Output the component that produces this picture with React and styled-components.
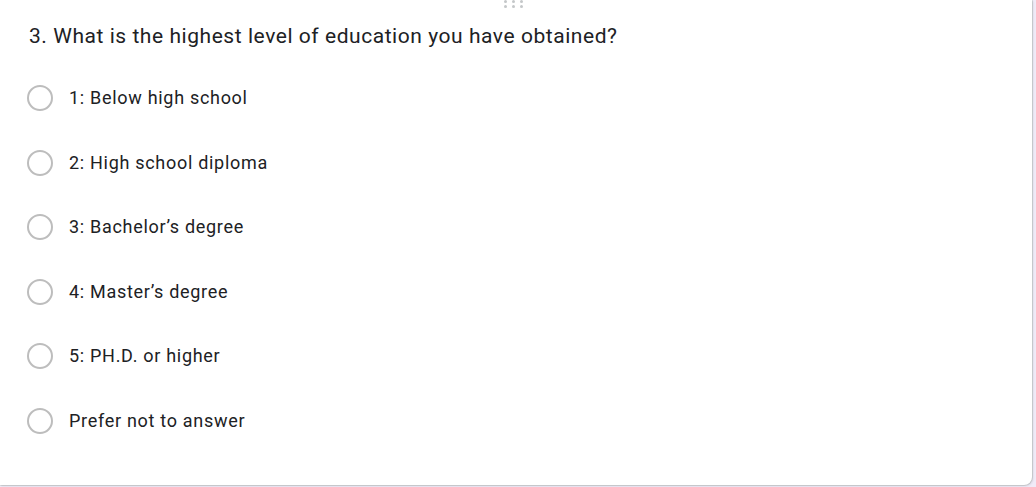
import React from "react";
import styled, { createGlobalStyle } from "styled-components";

const Global = createGlobalStyle`
  html, body { margin: 0; padding: 0; }
  body {
    background: #f0ebf8;
    font-family: Roboto, "Liberation Sans", Arial, sans-serif;
    width: 1036px;
    height: 487px;
    overflow: hidden;
  }
`;

const Card = styled.div`
  position: relative;
  box-sizing: border-box;
  width: 1032px;
  height: 485px;
  background: #ffffff;
  border-radius: 0 0 8px 0;
  box-shadow: 1px 1px 2px rgba(60, 64, 67, 0.18), 0 0 0 1px #dadce0;
  padding: 24px 0 0 29px;
`;

const Handle = styled.div`
  position: absolute;
  top: 0;
  left: 504px;
  display: grid;
  grid-template-columns: repeat(3, 3px);
  grid-auto-rows: 3px;
  column-gap: 5px;
  row-gap: 2px;
`;

const Dot = styled.span`
  width: 3px;
  height: 3px;
  border-radius: 50%;
  background: #c4c7c9;
`;

const Title = styled.h2`
  margin: 0;
  font-size: 21px;
  line-height: 24px;
  font-weight: 400;
  color: #202124;
  letter-spacing: 0.55px;
`;

const Options = styled.div`
  display: flex;
  flex-direction: column;
  gap: 38.6px;
  margin-top: 37px;
  margin-left: -2px;
`;

const Option = styled.label`
  display: flex;
  align-items: center;
  gap: 16px;
  height: 26px;
  cursor: pointer;
`;

const Radio = styled.span`
  box-sizing: border-box;
  width: 26px;
  height: 26px;
  border-radius: 50%;
  border: 2px solid #bdbdbd;
  flex-shrink: 0;
`;

const Label = styled.span`
  font-size: 18px;
  line-height: 22px;
  color: #202124;
  letter-spacing: 0.7px;
`;

const choices = [
  "1: Below high school",
  "2: High school diploma",
  "3: Bachelor\u2019s degree",
  "4: Master\u2019s degree",
  "5: PH.D. or higher",
  "Prefer not to answer",
];

export default function App() {
  return (
    <>
      <Global />
      <Card>
        <Handle>
          {Array.from({ length: 6 }).map((_, i) => (
            <Dot key={i} />
          ))}
        </Handle>
        <Title>3. What is the highest level of education you have obtained?</Title>
        <Options>
          {choices.map((c) => (
            <Option key={c}>
              <Radio />
              <Label>{c}</Label>
            </Option>
          ))}
        </Options>
      </Card>
    </>
  );
}
